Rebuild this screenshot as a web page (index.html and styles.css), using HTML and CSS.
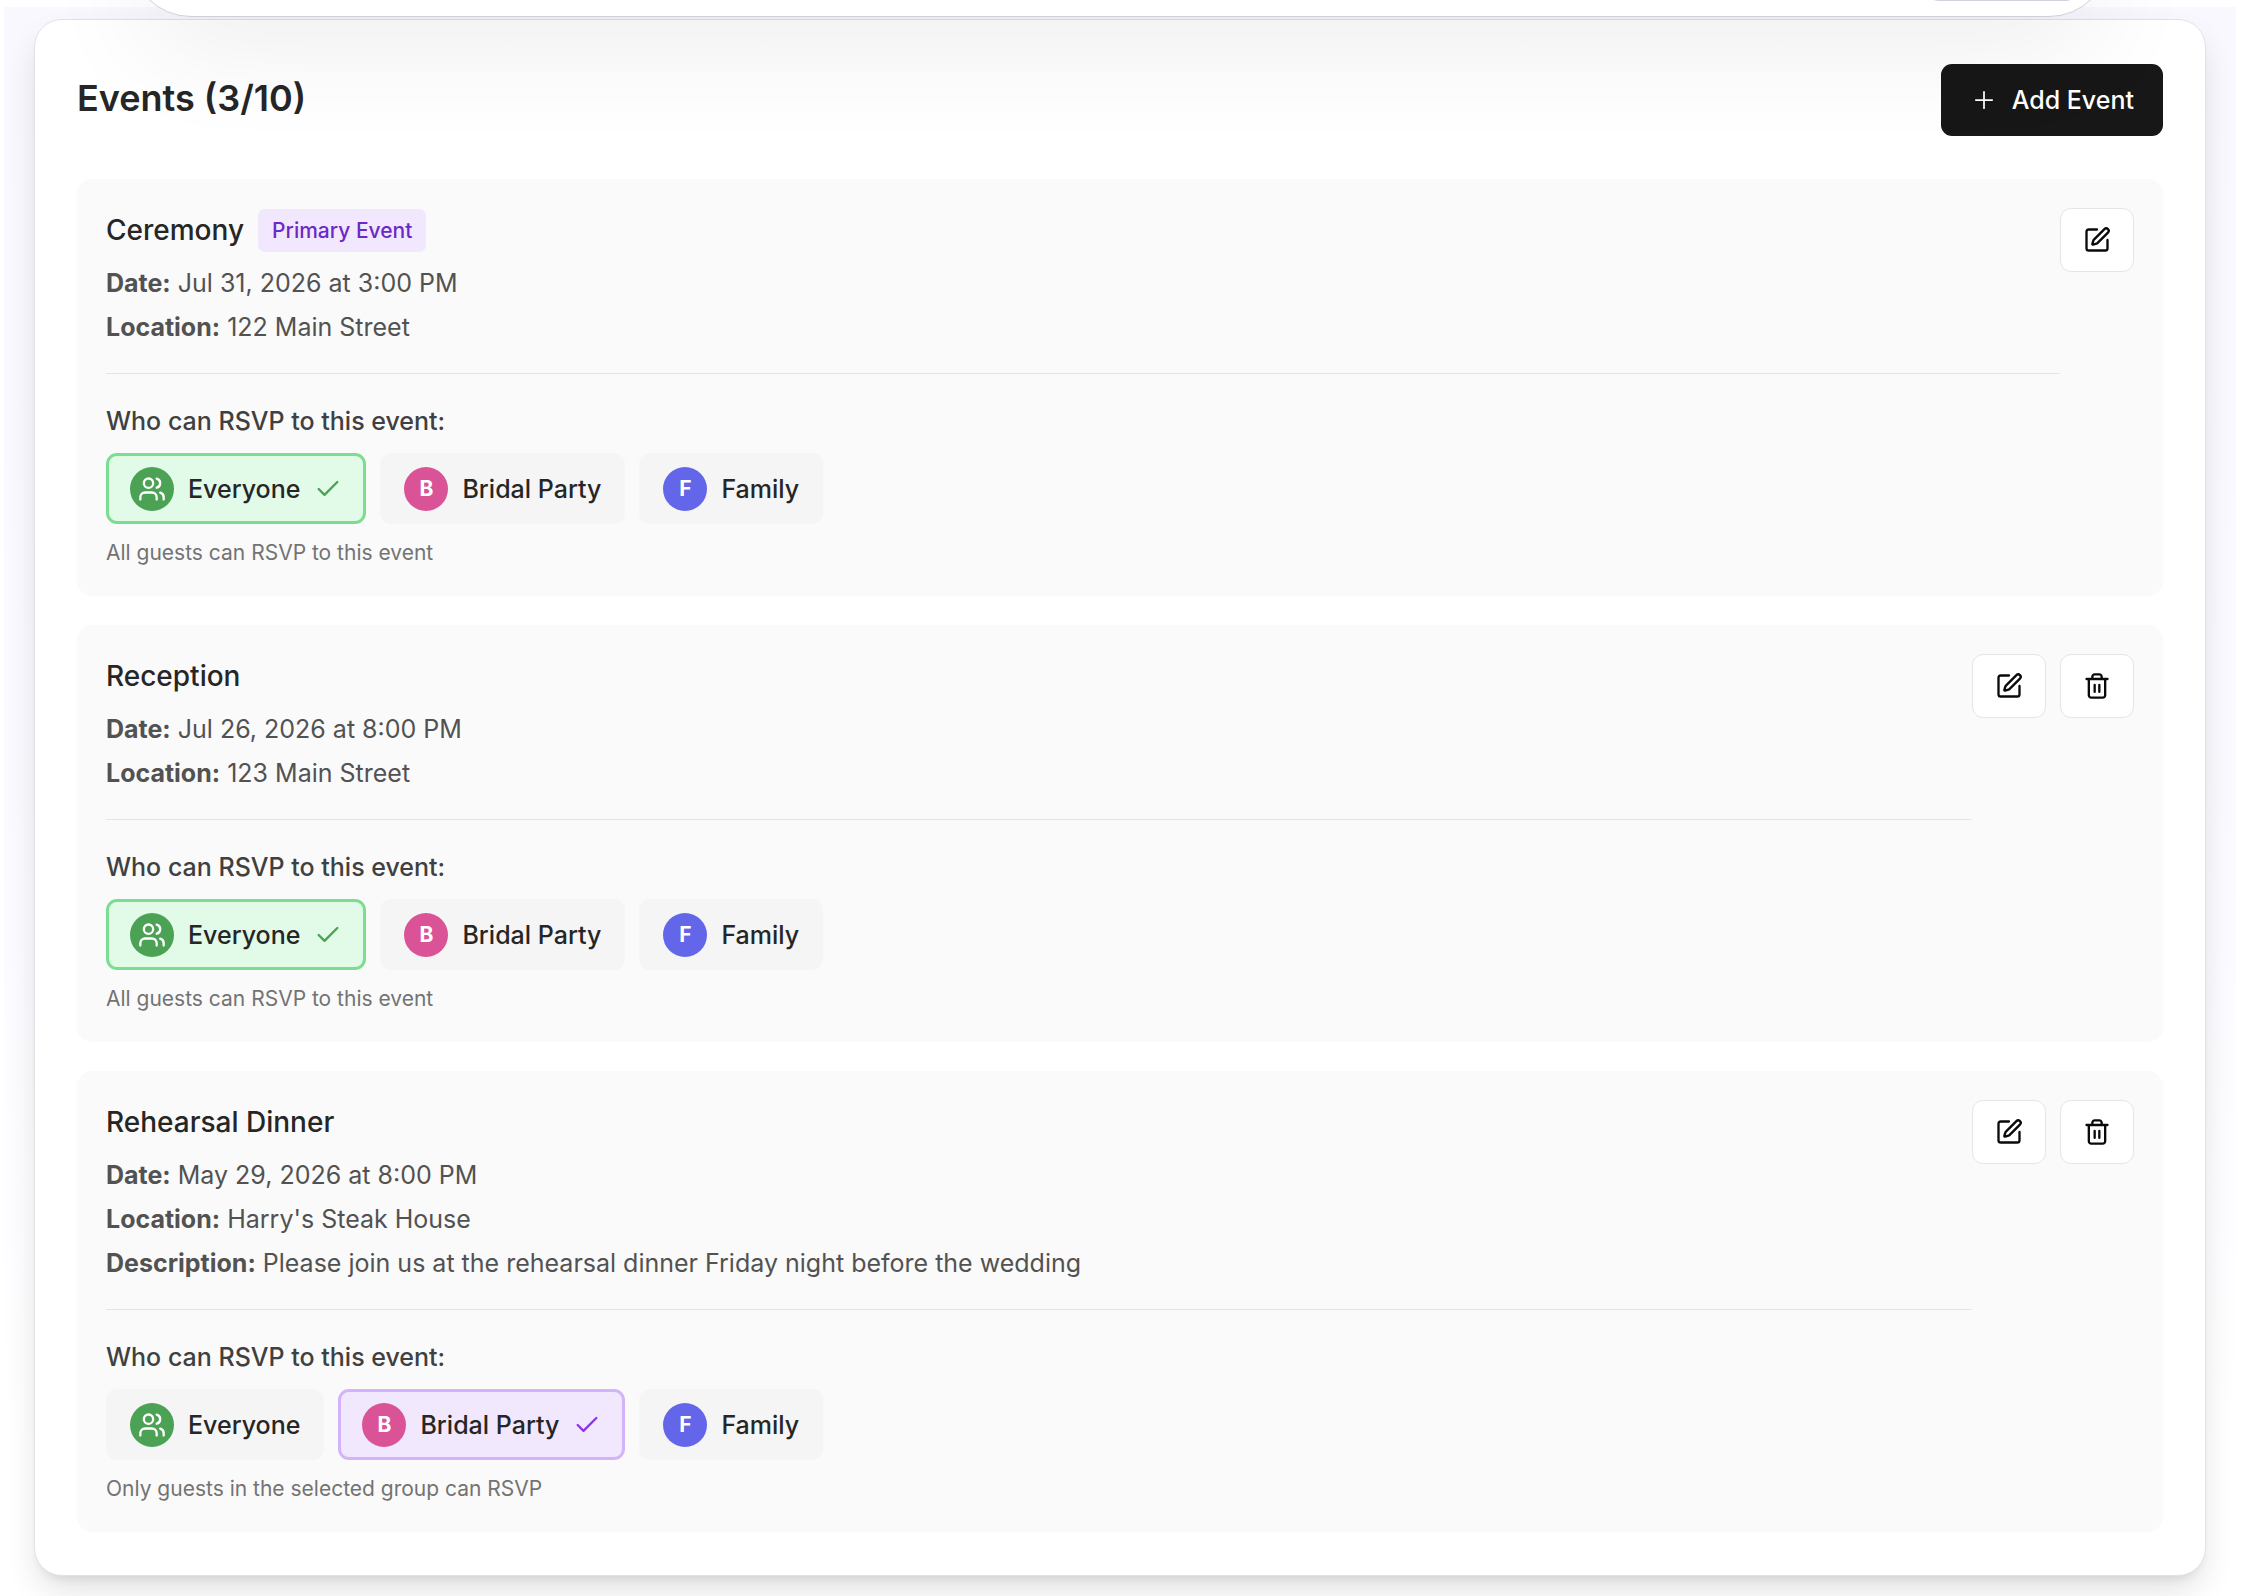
FILE: index.html
```html
<!DOCTYPE html>
<html lang="en">
<head>
    <meta charset="UTF-8">
    <meta name="viewport" content="width=device-width, initial-scale=1.0">
    <title>Wedding Events</title>
    <link rel="stylesheet" href="styles.css">
</head>
<body>
    <!-- Shared icons -->
    <svg class="sprite" aria-hidden="true">
        <symbol id="icon-plus" viewBox="0 0 24 24"><path d="M5 12h14M12 5v14"/></symbol>
        <symbol id="icon-edit" viewBox="0 0 24 24">
            <path d="M12 3H5a2 2 0 0 0-2 2v14a2 2 0 0 0 2 2h14a2 2 0 0 0 2-2v-7"/>
            <path d="M18.375 2.625a1 1 0 0 1 3 3l-9.013 9.014a2 2 0 0 1-.853.505l-2.873.84a.5.5 0 0 1-.62-.62l.84-2.873a2 2 0 0 1 .506-.852z"/>
        </symbol>
        <symbol id="icon-trash" viewBox="0 0 24 24">
            <path d="M3 6h18M19 6v14c0 1-1 2-2 2H7c-1 0-2-1-2-2V6M8 6V4c0-1 1-2 2-2h4c1 0 2 1 2 2v2M10 11v6M14 11v6"/>
        </symbol>
        <symbol id="icon-users" viewBox="0 0 24 24">
            <path d="M16 21v-2a4 4 0 0 0-4-4H6a4 4 0 0 0-4 4v2"/>
            <circle cx="9" cy="7" r="4"/>
            <path d="M22 21v-2a4 4 0 0 0-3-3.87M16 3.13a4 4 0 0 1 0 7.75"/>
        </symbol>
        <symbol id="icon-check" viewBox="0 0 24 24"><path d="M20 6 9 17l-5-5"/></symbol>
    </svg>

    <div class="page">
        <nav class="navbar" aria-label="Main">
            <button class="nav-button" type="button" aria-label="Account"></button>
        </nav>

        <main class="card">
            <div class="card-header">
                <h1 class="card-title">Events (3/10)</h1>
                <button class="add-button" type="button">
                    <svg class="icon icon-thin"><use href="#icon-plus"/></svg>
                    Add Event
                </button>
            </div>

            <div class="event-list">
                <article class="event">
                    <div class="event-body">
                        <div class="event-heading">
                            <h2 class="event-title">Ceremony</h2>
                            <span class="badge">Primary Event</span>
                        </div>
                        <p class="detail"><strong>Date:</strong> Jul 31, 2026 at 3:00 PM</p>
                        <p class="detail"><strong>Location:</strong> 122 Main Street</p>
                        <div class="rsvp">
                            <h3 class="rsvp-title">Who can RSVP to this event:</h3>
                            <div class="groups">
                                <button class="group group-everyone selected" type="button" aria-pressed="true">
                                    <span class="avatar avatar-green"><svg class="icon"><use href="#icon-users"/></svg></span>
                                    Everyone
                                    <svg class="icon check"><use href="#icon-check"/></svg>
                                </button>
                                <button class="group" type="button" aria-pressed="false">
                                    <span class="avatar avatar-pink">B</span>
                                    Bridal Party
                                </button>
                                <button class="group" type="button" aria-pressed="false">
                                    <span class="avatar avatar-indigo">F</span>
                                    Family
                                </button>
                            </div>
                            <p class="hint">All guests can RSVP to this event</p>
                        </div>
                    </div>
                    <div class="actions">
                        <button class="icon-button" type="button" aria-label="Edit Ceremony"><svg class="icon"><use href="#icon-edit"/></svg></button>
                    </div>
                </article>

                <article class="event">
                    <div class="event-body">
                        <div class="event-heading">
                            <h2 class="event-title">Reception</h2>
                        </div>
                        <p class="detail"><strong>Date:</strong> Jul 26, 2026 at 8:00 PM</p>
                        <p class="detail"><strong>Location:</strong> 123 Main Street</p>
                        <div class="rsvp">
                            <h3 class="rsvp-title">Who can RSVP to this event:</h3>
                            <div class="groups">
                                <button class="group group-everyone selected" type="button" aria-pressed="true">
                                    <span class="avatar avatar-green"><svg class="icon"><use href="#icon-users"/></svg></span>
                                    Everyone
                                    <svg class="icon check"><use href="#icon-check"/></svg>
                                </button>
                                <button class="group" type="button" aria-pressed="false">
                                    <span class="avatar avatar-pink">B</span>
                                    Bridal Party
                                </button>
                                <button class="group" type="button" aria-pressed="false">
                                    <span class="avatar avatar-indigo">F</span>
                                    Family
                                </button>
                            </div>
                            <p class="hint">All guests can RSVP to this event</p>
                        </div>
                    </div>
                    <div class="actions">
                        <button class="icon-button" type="button" aria-label="Edit Reception"><svg class="icon"><use href="#icon-edit"/></svg></button>
                        <button class="icon-button" type="button" aria-label="Delete Reception"><svg class="icon"><use href="#icon-trash"/></svg></button>
                    </div>
                </article>

                <article class="event">
                    <div class="event-body">
                        <div class="event-heading">
                            <h2 class="event-title">Rehearsal Dinner</h2>
                        </div>
                        <p class="detail"><strong>Date:</strong> May 29, 2026 at 8:00 PM</p>
                        <p class="detail"><strong>Location:</strong> Harry's Steak House</p>
                        <p class="detail"><strong>Description:</strong> Please join us at the rehearsal dinner Friday night before the wedding</p>
                        <div class="rsvp">
                            <h3 class="rsvp-title">Who can RSVP to this event:</h3>
                            <div class="groups">
                                <button class="group group-everyone" type="button" aria-pressed="false">
                                    <span class="avatar avatar-green"><svg class="icon"><use href="#icon-users"/></svg></span>
                                    Everyone
                                </button>
                                <button class="group selected" type="button" aria-pressed="true">
                                    <span class="avatar avatar-pink">B</span>
                                    Bridal Party
                                    <svg class="icon check"><use href="#icon-check"/></svg>
                                </button>
                                <button class="group" type="button" aria-pressed="false">
                                    <span class="avatar avatar-indigo">F</span>
                                    Family
                                </button>
                            </div>
                            <p class="hint">Only guests in the selected group can RSVP</p>
                        </div>
                    </div>
                    <div class="actions">
                        <button class="icon-button" type="button" aria-label="Edit Rehearsal Dinner"><svg class="icon"><use href="#icon-edit"/></svg></button>
                        <button class="icon-button" type="button" aria-label="Delete Rehearsal Dinner"><svg class="icon"><use href="#icon-trash"/></svg></button>
                    </div>
                </article>
            </div>
        </main>
    </div>
</body>
</html>
```
FILE: styles.css
```css
* {
    margin: 0;
    padding: 0;
    box-sizing: border-box;
}

body {
    font-family: Inter, "Liberation Sans", sans-serif;
    font-size: 25px;
    line-height: 36px;
    color: #262626;
    background: #fff;
    overflow-x: hidden;
}

button {
    font: inherit;
    color: inherit;
    border: none;
    cursor: pointer;
}

.sprite {
    display: none;
}

.icon {
    width: 28px;
    height: 28px;
    flex: none;
    fill: none;
    stroke: currentColor;
    stroke-width: 2;
    stroke-linecap: round;
    stroke-linejoin: round;
}

.icon-thin {
    stroke-width: 1.5;
}

.page {
    position: relative;
    margin: 7px 14px 0 4px;
    padding: 12px 30px 20px;
    background: linear-gradient(180deg, #faf8ff 0, #fbfaff 50%, #fff 90%);
}

/* Floating navigation pill, hangs over the top of the page */
.navbar {
    position: absolute;
    z-index: 2;
    top: -112px;
    left: 126px;
    right: 126px;
    height: 122px;
    padding: 0 32px 15px;
    display: flex;
    justify-content: flex-end;
    align-items: flex-end;
    background: #fff;
    border: 1px solid #d0d0da;
    border-radius: 61px;
    box-shadow: 0 36px 110px -6px rgba(0, 0, 0, 0.07);
}

.nav-button {
    width: 150px;
    height: 72px;
    background: #fff;
    border: 1px solid #d0d0de;
    border-radius: 11px;
}

.card {
    position: relative;
    padding: 44px 42px 43px;
    background: #fff;
    border: 1px solid #e2e1e6;
    border-radius: 28px;
    box-shadow: 0 16px 32px -4px rgba(0, 0, 0, 0.13), 0 8px 12px -8px rgba(0, 0, 0, 0.12);
}

.card-header {
    display: flex;
    justify-content: space-between;
    align-items: flex-start;
    margin-bottom: 43px;
}

.card-title {
    font-size: 36px;
    line-height: 68px;
    font-weight: 600;
}

.add-button {
    display: flex;
    align-items: center;
    gap: 14px;
    height: 72px;
    padding: 0 29px;
    font-weight: 500;
    color: #fff;
    background: #171717;
    border-radius: 11px;
}

.event-list {
    display: flex;
    flex-direction: column;
    gap: 29px;
}

.event {
    display: flex;
    align-items: flex-start;
    padding: 29px;
    background: #fafafa;
    border-radius: 15px;
}

.event-body {
    flex: 1;
}

.event-heading {
    display: flex;
    align-items: center;
    gap: 14px;
    height: 44px;
    margin-bottom: 9px;
}

.event-title {
    font-size: 28px;
    line-height: 44px;
    font-weight: 500;
}

.badge {
    padding: 7px 14px;
    font-size: 21px;
    line-height: 29px;
    font-weight: 500;
    color: #6d28c9;
    background: #f1e8fe;
    border-radius: 7px;
}

.detail {
    line-height: 44px;
    color: #525252;
}

.detail strong {
    font-weight: 700;
}

.rsvp {
    margin-top: 24px;
    padding-top: 29px;
    border-top: 1px solid #e5e5e5;
}

.rsvp-title {
    font-size: 25px;
    font-weight: 500;
    color: #404040;
}

.groups {
    display: flex;
    flex-wrap: wrap;
    gap: 14px;
    margin: 14px 0;
}

.group {
    display: flex;
    align-items: center;
    gap: 14px;
    height: 71px;
    padding: 0 21px;
    font-weight: 500;
    background: #f5f5f5;
    border: 3px solid transparent;
    border-radius: 11px;
}

.group.selected {
    background: #f1e8fe;
    border-color: #d3b4fb;
}

.group-everyone.selected {
    background: #e2fae8;
    border-color: #7bdd90;
}

.avatar {
    display: flex;
    align-items: center;
    justify-content: center;
    width: 44px;
    height: 44px;
    font-size: 21px;
    font-weight: 700;
    color: #fff;
    border-radius: 50%;
}

.avatar-green { background: #4ba154; }
.avatar-pink { background: #db5397; }
.avatar-indigo { background: #6366e8; }

.check {
    color: #8b35e6;
}

.group-everyone .check {
    color: #4ba154;
}

.hint {
    font-size: 21px;
    line-height: 29px;
    color: #737373;
}

.actions {
    display: flex;
    gap: 14px;
}

.icon-button {
    display: flex;
    align-items: center;
    justify-content: center;
    width: 74px;
    height: 64px;
    color: #0a0a0a;
    background: #fff;
    border: 1px solid #e5e5e5;
    border-radius: 11px;
}
```
